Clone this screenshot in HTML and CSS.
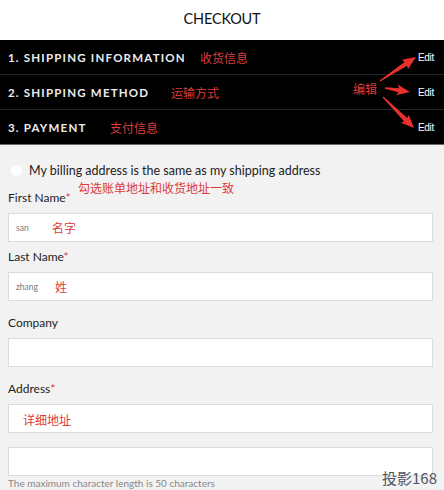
FILE: index.html
```html
<!DOCTYPE html>
<html lang="en">
<head>
<meta charset="utf-8">
<title>Checkout</title>
<link rel="stylesheet" href="styles.css">
</head>
<body>
<div class="page">
  <header class="top">CHECKOUT</header>
  <section class="steps">
    <div class="step">
      <span class="step-title">1. SHIPPING INFORMATION</span>
      <span class="note note-s1">收货信息</span>
      <span class="edit">Edit</span>
    </div>
    <div class="step">
      <span class="step-title">2. SHIPPING METHOD</span>
      <span class="note note-s2">运输方式</span>
      <span class="edit">Edit</span>
    </div>
    <div class="step step-last">
      <span class="step-title">3. PAYMENT</span>
      <span class="note note-s3">支付信息</span>
      <span class="edit">Edit</span>
    </div>
    <span class="note note-edit">编辑</span>
    <svg class="arrows" width="104" height="105" viewBox="0 0 104 105">
      <g fill="#e8302c">
        <polygon transform="translate(40,41) rotate(-33.7)" points="0,-0.6 31,-2.2 30,-5.5 43.3,0 30,5.5 31,2.2 0,0.6"/>
        <polygon transform="translate(45,48) rotate(9.1)" points="0,-0.8 14,-2 12,-5.5 25.3,0 12,5.5 14,2 0,0.8"/>
        <polygon transform="translate(43,57) rotate(45)" points="0,-0.6 32,-2.2 31,-5.5 43.8,0 31,5.5 32,2.2 0,0.6"/>
      </g>
    </svg>
  </section>
  <form class="form">
    <label class="radio-row">
      <span class="radio"></span>
      <span>My billing address is the same as my shipping address</span>
    </label>
    <span class="note note-same">勾选账单地址和收货地址一致</span>
    <div class="field field-first">
      <div class="label">First Name<span class="req">*</span></div>
      <div class="input"><span class="val">san</span><span class="note-in note-name">名字</span></div>
    </div>
    <div class="field field-tight">
      <div class="label">Last Name<span class="req">*</span></div>
      <div class="input"><span class="val">zhang</span><span class="note-in note-last">姓</span></div>
    </div>
    <div class="field">
      <div class="label">Company</div>
      <div class="input"></div>
    </div>
    <div class="field">
      <div class="label">Address<span class="req">*</span></div>
      <div class="input"><span class="note-in note-addr">详细地址</span></div>
      <div class="input input-second"></div>
      <div class="hint">The maximum character length is 50 characters</div>
    </div>
  </form>
  <div class="watermark">投影168</div>
</div>
</body>
</html>
```

FILE: styles.css
```css
* { box-sizing: border-box; }
html, body { margin: 0; padding: 0; }
body {
  background: #f2f2f2;
  font-family: Lato, "Noto Sans", sans-serif;
  color: #222;
  width: 444px;
  height: 490px;
  overflow: hidden;
}
.page { position: relative; height: 490px; }

.top {
  background: #fff;
  height: 40px;
  display: flex;
  align-items: center;
  justify-content: center;
  font-family: Lato, sans-serif;
  font-size: 14.5px;
  color: #111;
  padding-bottom: 3px;
  letter-spacing: -0.2px;
}

.steps {
  position: relative;
  background: #000;
  border-bottom: 1px solid #6a6a6a;
}
.step {
  position: relative;
  height: 35px;
  display: flex;
  align-items: center;
  justify-content: space-between;
  padding: 0 10px 0 8px;
  border-bottom: 1px solid #262626;
}
.step-last { border-bottom: none; height: 34px; }
.step-title {
  color: #ececec;
  font-family: Lato, sans-serif;
  font-weight: 700;
  font-size: 11.5px;
  letter-spacing: 1.2px;
  padding-top: 1px;
}
.edit {
  color: #fff;
  font-family: "Liberation Sans", Arial, sans-serif;
  font-size: 10px;
  letter-spacing: -0.3px;
}

.note, .note-in {
  position: absolute;
  color: #dd3b3b;
  font-family: "Noto Sans CJK SC", sans-serif;
  font-size: 12px;
  line-height: 16px;
}
.note-s1 { left: 200px; top: 10px; }
.note-s2 { left: 171px; top: 10px; }
.note-s3 { left: 110px; top: 10px; }
.note-edit { left: 353px; top: 41px; }
.arrows { position: absolute; left: 340px; top: 0; }

.form {
  position: relative;
  padding: 17px 11px 0 8px;
}
.radio-row {
  display: flex;
  align-items: center;
  gap: 7px;
  height: 16px;
  font-size: 12.5px;
  color: #222;
  padding-left: 3px;
}
.radio {
  width: 11px;
  height: 11px;
  border-radius: 50%;
  background: #fff;
  flex: none;
}
.note-same { left: 78px; top: 35px; }

.field { margin-top: 14px; }
.field-first { margin-top: 12px; }
.field-tight { margin-top: 7px; }
.label {
  height: 16px;
  line-height: 16px;
  font-size: 12px;
  color: #222;
  margin-bottom: 7px;
}
.req { color: #d9413f; }
.input {
  position: relative;
  height: 29px;
  background: #fff;
  border: 1px solid #dcdcdc;
  display: flex;
  align-items: center;
  padding-left: 7px;
}
.input-second { margin-top: 14px; }
.val {
  font-size: 8.5px;
  color: #7a7a7a;
}
.note-in { top: 6px; }
.note-name { left: 43px; }
.note-last { left: 46px; }
.note-addr { left: 14px; top: 7px; }
.hint {
  font-size: 10px;
  color: #888;
  line-height: 13px;
  margin-top: 1px;
}

.watermark {
  position: absolute;
  right: 7px;
  top: 468px;
  font-family: "Noto Sans CJK SC", sans-serif;
  font-size: 15px;
  color: #4f5666;
  line-height: 20px;
}
```
